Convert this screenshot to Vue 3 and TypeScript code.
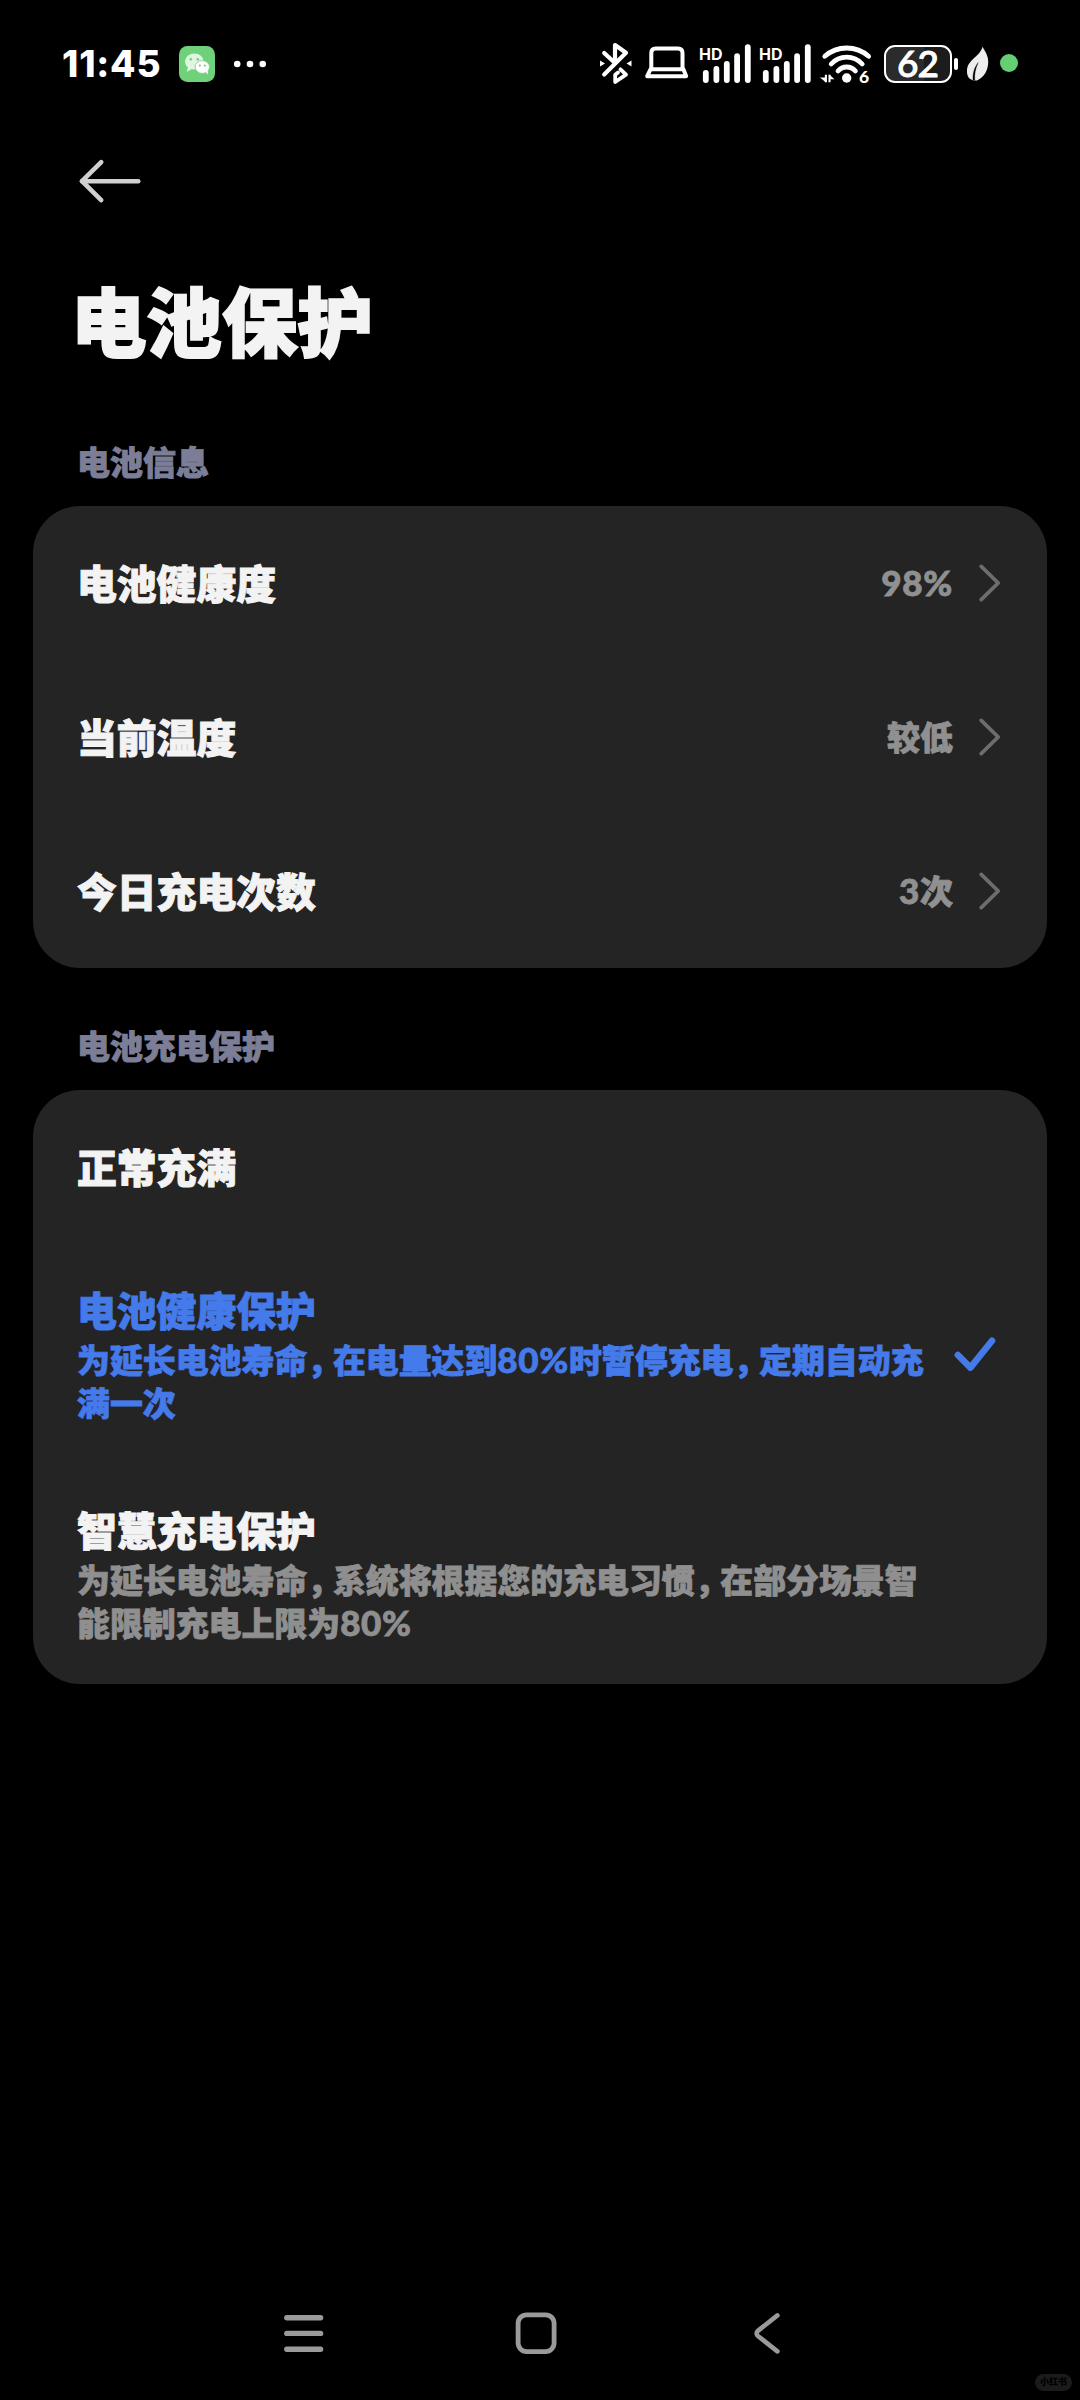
<script setup lang="ts">
interface InfoRow {
  label: string
  value: string
}

interface ModeRow {
  title: string
  lines: string[]
  selected: boolean
}

interface Piece {
  kind: 'han' | 'latin' | 'comma'
  text: string
}

const infoRows: InfoRow[] = [
  { label: '电池健康度', value: '98%' },
  { label: '当前温度', value: '较低' },
  { label: '今日充电次数', value: '3次' },
]

const modeRows: ModeRow[] = [
  { title: '正常充满', lines: [], selected: false },
  {
    title: '电池健康保护',
    lines: ['为延长电池寿命，在电量达到80%时暂停充电，定期自动充', '满一次'],
    selected: true,
  },
  {
    title: '智慧充电保护',
    lines: ['为延长电池寿命，系统将根据您的充电习惯，在部分场景智', '能限制充电上限为80%'],
    selected: false,
  },
]

// Numbers are set slightly larger than the Han text and commas tighter than full width.
function pieces(text: string): Piece[] {
  return text
    .split(/(，|[0-9%]+)/)
    .filter((part) => part !== '')
    .map((part) => ({
      kind: part === '，' ? 'comma' : /^[0-9%]+$/.test(part) ? 'latin' : 'han',
      text: part,
    }))
}

const bars = [
  { x: 2.9, y: 30 },
  { x: 13.5, y: 26 },
  { x: 23.9, y: 21 },
  { x: 34.2, y: 13.3 },
  { x: 44.9, y: 4.3 },
]
</script>

<template>
  <div class="screen">
    <header class="status">
      <div class="status-left">
        <span class="time">11:45</span>
        <svg class="wechat" width="36" height="50" viewBox="179 40 36 50">
          <rect x="179" y="46" width="36" height="36" rx="8.5" fill="#6fd17a" />
          <ellipse cx="194.3" cy="61.5" rx="9.3" ry="8" fill="#dff6e1" />
          <path d="M188 67l-1.2 5 5-3z" fill="#dff6e1" />
          <ellipse cx="202.3" cy="67" rx="7.2" ry="6.4" fill="#fff" stroke="#6fd17a" stroke-width="0.8" />
          <path d="M205 71.5l3 3-.4-4.5z" fill="#fff" />
          <g fill="#6fd17a">
            <circle cx="190.8" cy="59.3" r="1.3" />
            <circle cx="197.8" cy="59.3" r="1.3" />
            <circle cx="199.8" cy="65.6" r="1.1" />
            <circle cx="204.8" cy="65.6" r="1.1" />
          </g>
        </svg>
        <svg class="dots" width="34" height="50" viewBox="233 40 34 50" fill="#fff">
          <circle cx="237.2" cy="64" r="3.3" />
          <circle cx="250" cy="64" r="3.3" />
          <circle cx="262.7" cy="64" r="3.3" />
        </svg>
      </div>

      <div class="status-right">
        <svg width="34" height="50" viewBox="599 40 34 50" fill="none" stroke="#fff" stroke-width="4.2" stroke-linecap="round" stroke-linejoin="round">
          <path d="M604.2 53L615 63V45L626 52.8L604.2 74.4" />
          <path d="M620.5 69.3L626 74.6L615.2 82V74.8L618 72.5" stroke-width="3.8" />
          <path d="M600 60.5v6l5-3zM631.5 60.5v6l-5-3z" fill="#fff" stroke="none" />
        </svg>
        <svg class="laptop" width="44" height="50" viewBox="645 40 44 50" fill="none" stroke="#fff" stroke-width="4" stroke-linejoin="round">
          <path d="M651.3 69V53q0-4.5 4.5-4.5H678q4.5 0 4.5 4.5V69" />
          <path d="M650.6 69.2H683.4L686.2 76.2H647.2z" />
        </svg>
        <div v-for="n in 2" :key="n" class="signal">
          <svg width="51" height="50" viewBox="0 0 51 50" fill="#fff">
            <rect v-for="b in bars" :key="b.x" :x="b.x" :y="b.y" width="5.8" :height="43 - b.y" rx="2.9" />
          </svg>
          <span class="hd">HD</span>
        </div>
        <div class="wifi">
          <svg width="52" height="50" viewBox="820 40 52 50" fill="none" stroke="#fff" stroke-width="4.8" stroke-linecap="round">
            <path d="M824.8 56.3A33 33 0 0 1 868.6 56.3" />
            <path d="M831.2 64A21 21 0 0 1 862.2 64" />
            <path d="M838 71A11.5 11.5 0 0 1 855.4 71" />
            <circle cx="846.7" cy="78" r="4.7" fill="#fff" stroke="none" />
            <path d="M825.9 74.8V82.2M829.5 82.2V74.8" stroke-width="2.1" stroke-linecap="butt" />
            <path d="M826 82.4L820 77.6H826zM829.4 74.6L834.4 79.2H829.4z" fill="#fff" stroke="none" />
          </svg>
          <span class="six">6</span>
        </div>
        <div class="battery">
          <div class="cell">62</div>
          <div class="cap"></div>
        </div>
        <svg class="leaf" width="24" height="50" viewBox="966 40 24 50">
          <path d="M982.5 46.8C985.5 52 988.3 56 988.2 62C988.1 70 984.5 77 977 80.5L974.5 80.6C969.5 80 966.8 76.5 967 71C967.2 59.5 979.5 57.5 982.5 46.8Z" fill="#ededed" />
          <path d="M973 80.2C972.6 73 974.2 68 978.2 62.5C975.2 69 974.4 74 974.8 80.4" fill="#000" stroke="#000" stroke-width="0.3" />
        </svg>
        <div class="privacy"></div>
      </div>
    </header>

    <nav class="toolbar">
      <svg width="64" height="46" viewBox="78 158 64 46" fill="none" stroke="#d0d0d0" stroke-width="4.6" stroke-linecap="round" stroke-linejoin="round">
        <path d="M101.2 162.2L82 181.2L101.2 200.2" />
        <path d="M82 181.2H138.2" />
      </svg>
    </nav>

    <h1 class="title">电池保护</h1>

    <h2 class="section">电池信息</h2>
    <section class="card">
      <div v-for="row in infoRows" :key="row.label" class="row">
        <span class="label">{{ row.label }}</span>
        <span class="value"><span v-for="(p, k) in pieces(row.value)" :key="k" :class="p.kind">{{ p.text }}</span></span>
        <svg class="chevron" width="24" height="40" viewBox="0 0 24 40" fill="none" stroke="#6d6d6d" stroke-width="3.8" stroke-linecap="round" stroke-linejoin="round">
          <path d="M3.2 3.4L20.2 20L3.2 36.6" />
        </svg>
      </div>
    </section>

    <h2 class="section second">电池充电保护</h2>
    <section class="card">
      <div
        v-for="mode in modeRows"
        :key="mode.title"
        class="row"
        :class="{ tall: mode.lines.length > 0, selected: mode.selected }"
      >
        <div class="text">
          <div class="label">{{ mode.title }}</div>
          <div v-for="(line, i) in mode.lines" :key="i" class="line"><span v-for="(p, k) in pieces(line)" :key="k" :class="p.kind">{{ p.text }}</span></div>
        </div>
        <svg v-if="mode.selected" class="check" width="44" height="36" viewBox="953 1336 44 36" fill="none" stroke="#447ae9" stroke-width="6.6" stroke-linecap="round" stroke-linejoin="round">
          <path d="M957.9 1355L970.4 1367.6L992 1340.8" />
        </svg>
      </div>
    </section>

    <footer class="navbar">
      <svg width="42" height="46" viewBox="283 2310 42 46" fill="none" stroke="#9a9a9a" stroke-width="5.4" stroke-linecap="round">
        <path d="M286.8 2317.8H320.6M286.8 2333.4H320.6M286.8 2349.2H320.6" />
      </svg>
      <svg class="home" width="42" height="46" viewBox="514.5 2310 42 46" fill="none" stroke="#9a9a9a" stroke-width="4.8">
        <rect x="517.6" y="2314.8" width="36" height="36.8" rx="8.5" />
      </svg>
      <svg class="prev" width="28" height="46" viewBox="753 2310 28 46" fill="none" stroke="#9a9a9a" stroke-width="4.6" stroke-linecap="round">
        <path d="M777.4 2315.4L758.2 2330.6Q755 2333.4 758.2 2336.2L777.4 2351.4" />
      </svg>
    </footer>
    <span class="mark">小红书</span>
  </div>
</template>

<style>
html,
body {
  margin: 0;
  background: #000;
}
</style>

<style scoped>
.screen {
  position: relative;
  box-sizing: border-box;
  width: 1080px;
  height: 2400px;
  overflow: hidden;
  display: flex;
  flex-direction: column;
  background: #000;
  color: #f3f3f3;
  font-family: Lato, 'Noto Sans CJK SC', sans-serif;
  font-weight: 900;
}

svg {
  display: block;
  flex: none;
}

.status {
  box-sizing: border-box;
  height: 118px;
  padding: 40px 62px 0 62px;
  display: flex;
  justify-content: space-between;
}

.status-left,
.status-right {
  display: flex;
  height: 50px;
}

.time {
  width: 117px;
  font-family: Inter, sans-serif;
  font-weight: 800;
  font-size: 37px;
  line-height: 48px;
  letter-spacing: 0.8px;
  color: #fff;
  white-space: nowrap;
}

.dots {
  margin-left: 18px;
}

.laptop {
  margin-left: 12px;
}

.signal {
  position: relative;
  width: 51px;
  margin-left: 11px;
}

.signal + .signal {
  margin-left: 9px;
}

.hd {
  position: absolute;
  left: -1px;
  top: 6px;
  font-family: Inter, sans-serif;
  font-weight: 700;
  font-size: 16px;
  line-height: 16px;
  color: #fff;
}

.wifi {
  position: relative;
  margin-left: 9px;
}

.six {
  position: absolute;
  left: 39px;
  top: 28px;
  font-family: Lato, sans-serif;
  font-weight: 900;
  font-size: 17.5px;
  line-height: 17px;
  color: #fff;
}

.battery {
  display: flex;
  align-items: center;
  height: 38px;
  margin-top: 4.5px;
  margin-left: 11.5px;
}

.cell {
  box-sizing: border-box;
  width: 68px;
  height: 38px;
  border: 2px solid #fff;
  border-radius: 11px;
  background: linear-gradient(90deg, #2b2b2b 60%, #1c1c1c 60%);
  font-family: Lato, sans-serif;
  font-weight: 500;
  font-size: 37px;
  line-height: 32px;
  letter-spacing: -1px;
  text-align: center;
  color: #fff;
  -webkit-text-stroke: 0.9px #fff;
}

.cap {
  width: 4px;
  height: 12px;
  margin-left: 2px;
  border-radius: 2px;
  background: #fff;
}

.leaf {
  margin-left: 8.5px;
}

.privacy {
  width: 18px;
  height: 18px;
  margin: 14px 0 0 10px;
  border-radius: 50%;
  background: #66cf73;
}

.toolbar {
  height: 122px;
  padding: 40px 78px 0;
  box-sizing: border-box;
}

.title {
  margin: 26px 0 0 71px;
  font-size: 75.5px;
  line-height: 112px;
  font-weight: 900;
  -webkit-text-stroke: 2px currentColor;
}

.section {
  margin: 62px 0 0 77px;
  height: 66px;
  font-size: 33px;
  line-height: 44px;
  font-weight: 900;
  color: #7c7e97;
  -webkit-text-stroke: 0.9px currentColor;
}

.section.second {
  margin-top: 56px;
}

.card {
  margin: 0 33px;
  border-radius: 47px;
  background: #242424;
}

.row {
  box-sizing: border-box;
  height: 154px;
  padding: 0 45px 0 44px;
  display: flex;
  align-items: center;
}

.row.tall {
  height: 220px;
}

.label {
  padding-top: 2px;
  font-size: 39.8px;
  line-height: 54px;
  white-space: nowrap;
  -webkit-text-stroke: 1px currentColor;
}

.value {
  margin-left: auto;
  font-size: 33px;
  line-height: 44px;
  color: #909090;
  -webkit-text-stroke: 0.8px currentColor;
}

.latin {
  font-size: 35px;
  line-height: 1;
  letter-spacing: 0.7px;
}

.chevron {
  margin-left: 25px;
}

.text {
  width: 851px;
}

.tall .label {
  padding-top: 0;
}

.line {
  height: 43px;
  font-size: 32.9px;
  line-height: 45px;
  color: #8f8f8f;
  white-space: nowrap;
  -webkit-text-stroke: 0.8px currentColor;
}

.comma {
  font-feature-settings: 'halt';
  margin-right: 9.2px;
}

.selected .label,
.selected .line {
  color: #447ae9;
}

.check {
  margin-left: 25px;
}

.navbar {
  display: flex;
  margin-top: auto;
  padding: 0 0 44px 283px;
}

.home {
  margin-left: 189.5px;
}

.prev {
  margin-left: 196.5px;
}

.mark {
  position: absolute;
  right: 8px;
  bottom: 9px;
  width: 37px;
  height: 17px;
  border-radius: 9px;
  background: #1b1b1b;
  color: #000;
  font-size: 9px;
  line-height: 16px;
  text-align: center;
}
</style>
